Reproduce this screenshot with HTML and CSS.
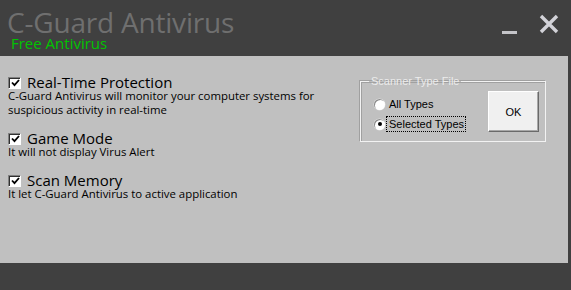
FILE: index.html
```html
<!DOCTYPE html>
<html>
<head>
<meta charset="utf-8">
<link rel="stylesheet" href="styles.css">
</head>
<body>
<div class="app">
  <header class="titlebar">
    <div class="brand">
      <div class="title">C-Guard Antivirus</div>
      <div class="subtitle">Free Antivirus</div>
    </div>
    <div class="controls">
      <span class="minimize"></span>
      <svg class="close" width="20" height="20" viewBox="0 0 20 20"><path d="M2 2 L18 18 M18 2 L2 18" stroke="#d2d2d8" stroke-width="3.4" fill="none"/></svg>
    </div>
  </header>
  <main class="panel">
    <section class="options">
      <div class="option">
        <label class="opt-head"><span class="check"><svg width="9" height="8" viewBox="0 0 9 8"><path d="M1 3.5 L3.5 6.2 L8 1" stroke="#000" stroke-width="1.8" fill="none"/></svg></span><span class="opt-title">Real-Time Protection</span></label>
        <p class="desc">C-Guard Antivirus will monitor your computer systems for<br>suspicious activity in real-time</p>
      </div>
      <div class="option">
        <label class="opt-head"><span class="check"><svg width="9" height="8" viewBox="0 0 9 8"><path d="M1 3.5 L3.5 6.2 L8 1" stroke="#000" stroke-width="1.8" fill="none"/></svg></span><span class="opt-title">Game Mode</span></label>
        <p class="desc">It will not display Virus Alert</p>
      </div>
      <div class="option">
        <label class="opt-head"><span class="check"><svg width="9" height="8" viewBox="0 0 9 8"><path d="M1 3.5 L3.5 6.2 L8 1" stroke="#000" stroke-width="1.8" fill="none"/></svg></span><span class="opt-title">Scan Memory</span></label>
        <p class="desc">It let C-Guard Antivirus to active application</p>
      </div>
    </section>
    <fieldset class="group">
      <legend class="legend">Scanner Type File</legend>
      <div class="radios">
        <label class="radio"><span class="dot"></span><span class="rlabel">All Types</span></label>
        <label class="radio"><span class="dot on"></span><span class="rlabel focus">Selected Types</span></label>
      </div>
      <button class="ok">OK</button>
    </fieldset>
  </main>
</div>
</body>
</html>
```
FILE: styles.css
```css
html, body {
  margin: 0;
  padding: 0;
  background: #404040;
}
.app {
  width: 571px;
  height: 290px;
  background: #404040;
}
.titlebar {
  height: 56px;
  display: flex;
  justify-content: space-between;
  box-sizing: border-box;
}
.brand {
  padding-left: 7px;
  padding-top: 9px;
}
.title {
  font-family: "Open Sans", "Noto Sans", sans-serif;
  font-size: 28px;
  line-height: 26px;
  color: #6f6f6f;
  letter-spacing: -0.2px;
}
.subtitle {
  font-family: "Open Sans", "Noto Sans", sans-serif;
  font-size: 15px;
  line-height: 16px;
  color: #00c400;
  padding-left: 4px;
}
.controls {
  display: flex;
  align-items: flex-start;
  padding-right: 12px;
  padding-top: 14px;
  gap: 22px;
}
.minimize {
  display: block;
  width: 15px;
  height: 3px;
  background: #c4c4c8;
  margin-top: 17px;
}
.close {
  display: block;
}
.panel {
  width: 568px;
  height: 207px;
  background: #c0c0c0;
  display: flex;
  justify-content: space-between;
  align-items: flex-start;
  box-sizing: border-box;
  padding: 20px 22px 0 8px;
}
.options {
  display: flex;
  flex-direction: column;
  gap: 15px;
}
.option {
  display: flex;
  flex-direction: column;
}
.opt-head {
  display: flex;
  align-items: center;
  gap: 6px;
  height: 13px;
}
.check {
  width: 10px;
  height: 10px;
  background: #fff;
  border: 1px solid;
  border-color: #808080 #fff #fff #808080;
  box-shadow: inset 1px 1px 0 #303030;
  display: flex;
  align-items: center;
  justify-content: center;
  padding: 0 0 0 1px;
}
.opt-title {
  font-family: "Open Sans", "Noto Sans", sans-serif;
  font-size: 15px;
  color: #000;
  line-height: 13px;
}
.desc {
  margin: 0;
  font-family: "Open Sans", "Noto Sans", sans-serif;
  font-size: 11.4px;
  line-height: 14px;
  color: #000;
}
.group {
  margin: -1px 0 0 0;
  width: 186px;
  height: 67px;
  box-sizing: border-box;
  border: 1px solid #f2f2f2;
  box-shadow: inset 1px 1px 0 #a0a0a0, -1px -1px 0 #a0a0a0;
  padding: 0 6px 0 13px;
  display: flex;
  justify-content: space-between;
  align-items: flex-start;
}
.legend {
  font-family: "Liberation Sans", Arial, sans-serif;
  font-size: 11px;
  color: #ececec;
  padding: 0 2px;
  margin-left: -5px;
}
.radios {
  display: flex;
  flex-direction: column;
  gap: 4px;
  padding-top: 9px;
}
.radio {
  display: flex;
  align-items: center;
  gap: 4px;
  font-family: "Liberation Sans", Arial, sans-serif;
  font-size: 11px;
  color: #000;
  height: 16px;
}
.dot {
  width: 11px;
  height: 11px;
  border-radius: 50%;
  background: #fff;
  box-shadow: inset 1px 1px 0 #8a8a8a, 0 0 0 0.5px #e0e0e0;
  display: flex;
  align-items: center;
  justify-content: center;
}
.dot.on::after {
  content: "";
  width: 4px;
  height: 4px;
  border-radius: 50%;
  background: #000;
}
.rlabel {
  padding: 0;
}
.rlabel.focus {
  border: 1px dotted #000;
  padding: 1px 1px 1px 2px;
  margin-left: -3px;
}
.ok {
  margin-top: 4px;
  width: 51px;
  height: 41px;
  background: #f0f0f0;
  border: 1px solid #fff;
  border-right-color: #6a6a6a;
  border-bottom-color: #6a6a6a;
  box-shadow: inset -1px -1px 0 #a8a8a8;
  font-family: "Liberation Sans", Arial, sans-serif;
  font-size: 11px;
  color: #000;
  padding: 0;
}
```
